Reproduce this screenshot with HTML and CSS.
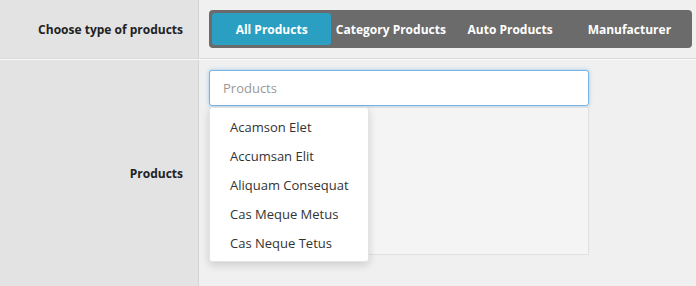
FILE: index.html
```html
<!DOCTYPE html>
<html>
<head>
<meta charset="utf-8">
<link rel="stylesheet" href="styles.css">
</head>
<body>
<div class="form">
  <div class="row row-type">
    <div class="label">Choose type of products</div>
    <div class="field">
      <div class="segmented">
        <button class="seg active">All Products</button>
        <button class="seg">Category Products</button>
        <button class="seg">Auto Products</button>
        <button class="seg">Manufacturer</button>
      </div>
    </div>
  </div>
  <div class="row row-products">
    <div class="label">Products</div>
    <div class="field">
      <div class="picker">
        <input class="search" type="text" placeholder="Products">
        <div class="selected-box"></div>
        <ul class="dropdown">
          <li>Acamson Elet</li>
          <li>Accumsan Elit</li>
          <li>Aliquam Consequat</li>
          <li>Cas Meque Metus</li>
          <li>Cas Neque Tetus</li>
        </ul>
      </div>
    </div>
  </div>
</div>
</body>
</html>
```
FILE: styles.css
```css
html, body {
  margin: 0;
  padding: 0;
  background: #f0f0f0;
  font-family: "Open Sans", "Noto Sans", sans-serif;
  color: #333;
}
.form {
  width: 696px;
}
.row {
  display: grid;
  grid-template-columns: 199px 1fr;
}
.row-type {
  border-bottom: 1px solid #dadada;
}
.row-products {
  border-top: 1px solid #fafafa;
}
.label {
  background: #e3e3e3;
  border-right: 1px solid #d4d4d4;
  display: flex;
  align-items: center;
  justify-content: flex-end;
  padding-right: 15px;
  font-weight: 700;
  font-size: 12px;
  color: #222;
}
.field {
  background: #f0f0f0;
  padding: 10px 4px 10px 10px;
}
.segmented {
  display: flex;
  height: 38px;
  box-sizing: border-box;
  padding: 3px;
  background: #6b6b6b;
  border-radius: 4px;
}
.seg {
  flex: 1;
  border: 0;
  background: transparent;
  color: #fff;
  font-family: inherit;
  font-weight: 700;
  font-size: 12px;
  padding: 0;
  border-radius: 3px;
  white-space: nowrap;
}
.seg.active {
  background: #2a9fc1;
}
.row-products .field {
  padding-bottom: 31px;
}
.picker {
  position: relative;
  width: 380px;
}
.search {
  display: block;
  box-sizing: border-box;
  width: 380px;
  height: 36px;
  margin: 0;
  padding: 0 13px;
  border: 1px solid #7ab3df;
  border-radius: 3px;
  box-shadow: 0 0 4px rgba(102, 175, 233, 0.6);
  background: #fff;
  font-family: inherit;
  font-size: 13px;
  color: #333;
  outline: none;
}
.search::placeholder {
  color: #999;
}
.selected-box {
  margin-top: 1px;
  height: 148px;
  box-sizing: border-box;
  background: #f4f4f4;
  border: 1px solid #e0e0e0;
}
.dropdown {
  position: absolute;
  left: 0;
  top: 37px;
  width: 160px;
  box-sizing: border-box;
  margin: 0;
  padding: 5px 0 3px;
  list-style: none;
  background: #fff;
  border: 1px solid #e4e4e4;
  border-radius: 3px;
  box-shadow: 0 3px 8px rgba(0, 0, 0, 0.15);
}
.dropdown li {
  height: 29px;
  line-height: 29px;
  padding-left: 20px;
  font-size: 13px;
  color: #333;
  white-space: nowrap;
}
```
